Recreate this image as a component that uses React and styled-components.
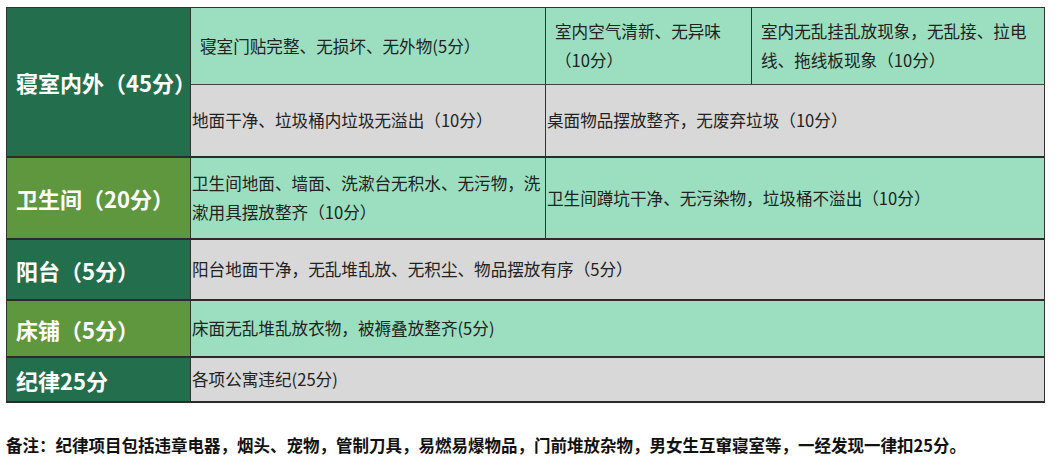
import React from "react";
import styled, { createGlobalStyle } from "styled-components";

const GlobalStyle = createGlobalStyle`
    body {
        margin: 0;
        background: #ffffff;
        font-family: "Noto Sans CJK SC", "Noto Sans", sans-serif;
    }
`;

const Page = styled.div`
    padding: 7px 6px 0 6px;
    width: 1059px;
    height: 456px;
    box-sizing: border-box;
    overflow: hidden;
`;

const Table = styled.div`
    display: grid;
    grid-template-columns: 184px 355px 206px 293px;
    grid-template-rows: 77px 73px 82px 61px 57px 45px;
    width: 1039px;
    box-sizing: border-box;
    border-top: 1px solid #333;
    border-left: 1px solid #333;
`;

const colors = {
    dark: "#236f4d",
    olive: "#5f973f",
    mint: "#9bdfc0",
    gray: "#d8d8d8",
};

const Head = styled.div`
    grid-row: ${props => props.rows};
    grid-column: 1;
    display: flex;
    align-items: center;
    padding-left: 9px;
    box-sizing: border-box;
    background-color: ${props => colors[props.tone]};
    border-right: 1px solid #333;
    border-bottom: 2px solid #2b2b2b;
    color: #ffffff;
    font-size: 22px;
    font-weight: bold;
    white-space: nowrap;
`;

const Cell = styled.div`
    grid-row: ${props => props.row};
    grid-column: ${props => props.cols};
    display: flex;
    align-items: center;
    box-sizing: border-box;
    padding: ${props => (props.padded ? "0 8px 0 9px" : "0 0 0 1px")};
    background-color: ${props => colors[props.tone]};
    border-right: 1px solid #333;
    border-bottom: ${props => (props.thin ? "1px solid #444" : "2px solid #2b2b2b")};
    color: #222;
    font-size: 16.6px;
    line-height: 29px;
`;

const Note = styled.p`
    margin: 30px 0 0 0;
    font-size: 16.5px;
    line-height: 24px;
    font-weight: bold;
    color: #111;
    white-space: nowrap;
`;

const App = () => (
    <Page>
        <GlobalStyle />
        <Table>
            <Head rows="1 / 3" tone="dark">寝室内外（45分）</Head>
            <Cell row={1} cols="2" tone="mint" padded thin>寝室门贴完整、无损坏、无外物(5分）</Cell>
            <Cell row={1} cols="3" tone="mint" padded thin>室内空气清新、无异味（10分）</Cell>
            <Cell row={1} cols="4" tone="mint" padded thin>室内无乱挂乱放现象，无乱接、拉电线、拖线板现象（10分）</Cell>
            <Cell row={2} cols="2" tone="gray">地面干净、垃圾桶内垃圾无溢出（10分）</Cell>
            <Cell row={2} cols="3 / 5" tone="gray">桌面物品摆放整齐，无废弃垃圾（10分）</Cell>

            <Head rows="3" tone="olive">卫生间（20分）</Head>
            <Cell row={3} cols="2" tone="mint">卫生间地面、墙面、洗漱台无积水、无污物，洗漱用具摆放整齐（10分）</Cell>
            <Cell row={3} cols="3 / 5" tone="mint">卫生间蹲坑干净、无污染物，垃圾桶不溢出（10分）</Cell>

            <Head rows="4" tone="dark">阳台（5分）</Head>
            <Cell row={4} cols="2 / 5" tone="gray">阳台地面干净，无乱堆乱放、无积尘、物品摆放有序（5分）</Cell>

            <Head rows="5" tone="olive">床铺（5分）</Head>
            <Cell row={5} cols="2 / 5" tone="mint">床面无乱堆乱放衣物，被褥叠放整齐(5分)</Cell>

            <Head rows="6" tone="dark">纪律25分</Head>
            <Cell row={6} cols="2 / 5" tone="gray">各项公寓违纪(25分)</Cell>
        </Table>
        <Note>备注：纪律项目包括违章电器，烟头、宠物，管制刀具，易燃易爆物品，门前堆放杂物，男女生互窜寝室等，一经发现一律扣25分。</Note>
    </Page>
);

export default App;
